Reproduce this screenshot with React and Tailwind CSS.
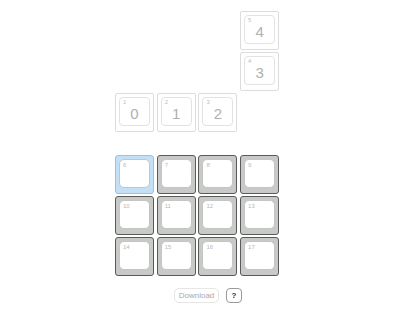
import React, { useState } from 'react';

const upperKeys = [
    { id: 5, legend: '4', col: 4, row: 1 },
    { id: 4, legend: '3', col: 4, row: 2 },
    { id: 1, legend: '0', col: 1, row: 3 },
    { id: 2, legend: '1', col: 2, row: 3 },
    { id: 3, legend: '2', col: 3, row: 3 },
];

const colStart = { 1: 'col-start-1', 2: 'col-start-2', 3: 'col-start-3', 4: 'col-start-4' };
const rowStart = { 1: 'row-start-1', 2: 'row-start-2', 3: 'row-start-3' };

function GhostKey({ id, legend }) {
    return (
        <div className="w-[39px] h-[39px] rounded-[2px] border border-[#dcdcdc] pt-[3px] px-[3px] pb-[5px]">
            <div className="relative h-full rounded-[4px] border border-[#e2e2e2] bg-white">
                <span className="absolute left-[3px] top-[1px] text-[6px] leading-none text-[#bdbdbd]">{id}</span>
                <div className="flex h-full items-center justify-center pt-[3px] text-[15px] leading-none text-[#b0b0b0]">
                    {legend}
                </div>
            </div>
        </div>
    );
}

function Key({ id, selected, onClick }) {
    const outer = selected
        ? 'bg-[#c3e0f7] border-[#95c3ea]'
        : 'bg-[#c8cac8] border-[#5a5a5a]';
    return (
        <div
            onClick={onClick}
            className={`w-[39px] h-[39px] rounded-[3px] border pt-[3px] px-[3px] pb-[5px] cursor-pointer ${outer}`}
        >
            <div className="relative h-full rounded-[5px] border border-[#c4c6c4] bg-white">
                <span className="absolute left-[3px] top-[2px] text-[6px] leading-none text-[#b8b8b8]">{id}</span>
            </div>
        </div>
    );
}

export default function App() {
    const [selected, setSelected] = useState(6);
    const gridKeys = Array.from({ length: 12 }, (_, i) => i + 6);

    return (
        <div className="w-[400px] h-[309px] bg-white font-['Liberation_Sans',Arial,sans-serif]">
            {/* Layer preview */}
            <div className="pt-[11px] pl-[115px]">
                <div className="grid grid-cols-[repeat(4,39px)] grid-rows-[repeat(3,39px)] gap-x-[2.7px] gap-y-[2px]">
                    {upperKeys.map((k) => (
                        <div key={k.id} className={`${colStart[k.col]} ${rowStart[k.row]}`}>
                            <GhostKey id={k.id} legend={k.legend} />
                        </div>
                    ))}
                </div>
            </div>

            {/* Main grid */}
            <div className="mt-[23px] pl-[115px]">
                <div className="grid grid-cols-[repeat(4,39px)] gap-x-[2.7px] gap-y-[2px]">
                    {gridKeys.map((id) => (
                        <Key key={id} id={id} selected={selected === id} onClick={() => setSelected(id)} />
                    ))}
                </div>
            </div>

            {/* Actions */}
            <div className="mt-[12px] pl-[174px] flex items-center gap-[7px]">
                <button className="h-[15px] w-[45px] rounded-[5px] border border-[#e6e6e6] text-[8px] leading-none text-[#aaaaaa]">
                    Download
                </button>
                <button className="h-[15px] w-[16px] rounded-[4px] border border-[#9a9a9a] text-[8px] font-bold leading-none text-[#333]">
                    ?
                </button>
            </div>
        </div>
    );
}
